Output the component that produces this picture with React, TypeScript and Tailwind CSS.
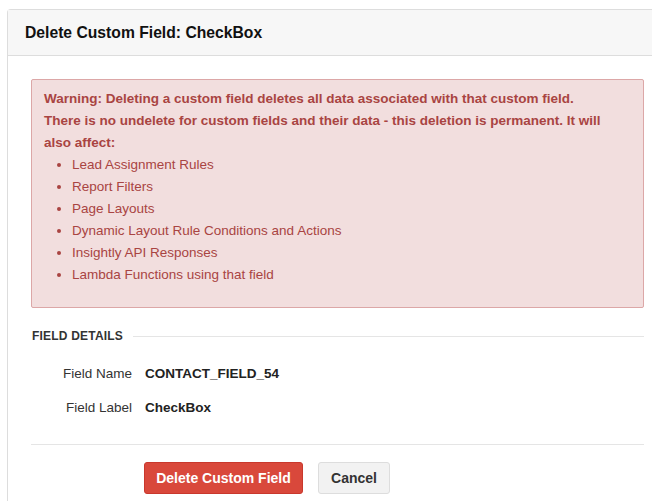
import { ReactNode } from "react";

const affected = [
  "Lead Assignment Rules",
  "Report Filters",
  "Page Layouts",
  "Dynamic Layout Rule Conditions and Actions",
  "Insightly API Responses",
  "Lambda Functions using that field",
];

const DetailRow = ({ label, children }: { label: string; children: ReactNode }) => (
  <div className="flex h-[34px] items-center text-[13.5px]">
    <div className="w-[114px] pr-[13px] text-right text-[#333]">{label}</div>
    <div className="font-bold text-[#222]">{children}</div>
  </div>
);

const App = () => {
  return (
    <div
      className="flex h-[501px] w-[652px] flex-col overflow-hidden bg-white pl-[7px] pt-[9px]"
      style={{ fontFamily: '"Liberation Sans", Arial, sans-serif' }}
    >
      <div className="w-[661px] flex-1 rounded-tl-[4px] border-l border-t border-[#dddddd]">
        {/* Header */}
        <div className="flex h-[46px] items-center border-b border-[#dddddd] bg-[#f7f7f7] pl-[17px]">
          <h1 className="text-[15.7px] font-bold text-[#111]">Delete Custom Field: CheckBox</h1>
        </div>

        <div className="pl-[23px] pr-[24px] pt-[23px]">
          {/* Warning */}
          <div className="rounded-[2px] border border-[#dca7a7] bg-[#f2dede] pb-[21px] pl-[12px] pr-[12px] pt-[8px] text-[13.5px] leading-[22px] text-[#a94442]">
            <p className="font-bold">
              Warning: Deleting a custom field deletes all data associated with that custom field.
              <br />
              There is no undelete for custom fields and their data - this deletion is permanent. It will
              <br />
              also affect:
            </p>
            <ul className="list-disc pl-[28px]">
              {affected.map((item) => (
                <li key={item}>{item}</li>
              ))}
            </ul>
          </div>

          {/* Field details */}
          <div className="mt-[20px] flex items-center pl-[1px]">
            <span className="text-[12px] font-bold leading-[16px] tracking-[0.2px] text-[#333]">FIELD DETAILS</span>
            <div className="ml-[10px] h-px flex-1 bg-[#e5e5e5]" />
          </div>

          <div className="mt-[13px]">
            <DetailRow label="Field Name">CONTACT_FIELD_54</DetailRow>
            <DetailRow label="Field Label">CheckBox</DetailRow>
          </div>

          <div className="mt-[19px] h-px bg-[#e5e5e5]" />

          <div className="mt-[17px] flex gap-[15px] pl-[113px]">
            <button className="h-[32px] w-[159px] rounded-[3px] border border-[#c9382d] bg-[#d9483b] text-[14px] font-bold text-white">
              Delete Custom Field
            </button>
            <button className="h-[32px] w-[72px] rounded-[3px] border border-[#dddddd] bg-[#f2f2f2] text-[14px] font-bold text-[#333]">
              Cancel
            </button>
          </div>
        </div>
      </div>
    </div>
  );
};

export default App;
